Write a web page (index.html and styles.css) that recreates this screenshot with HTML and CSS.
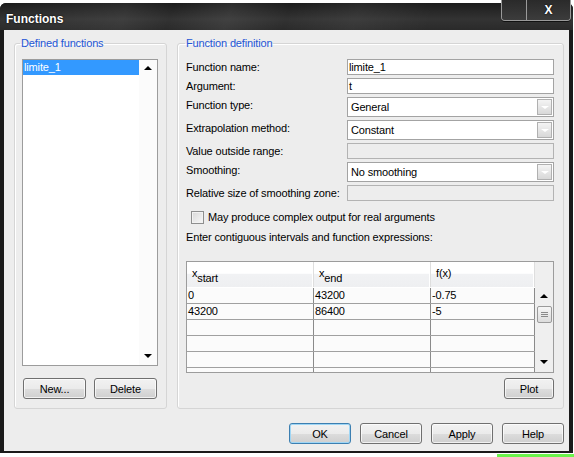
FILE: index.html
```html
<!DOCTYPE html>
<html lang="en">
<head>
    <meta charset="UTF-8">
    <title>Functions</title>
    <link rel="stylesheet" href="styles.css">
</head>
<body>
    <div class="window">
        <div class="titlebar">
            <span class="title">Functions</span>
            <div class="caption-buttons">
                <span class="cap-btn cap-blank"></span>
                <span class="cap-btn cap-close">X</span>
            </div>
        </div>
        <div class="client">
            <div class="groups">
                <fieldset class="group group-list">
                    <legend>Defined functions</legend>
                    <div class="listbox">
                        <div class="list-items">
                            <div class="list-item selected">limite_1</div>
                        </div>
                        <div class="list-scroll">
                            <span class="arrow-up"></span>
                            <span class="arrow-down"></span>
                        </div>
                    </div>
                    <div class="list-buttons">
                        <button class="btn">New...</button>
                        <button class="btn">Delete</button>
                    </div>
                </fieldset>

                <fieldset class="group group-def">
                    <legend>Function definition</legend>
                    <div class="form-grid">
                        <label class="field-label">Function name:</label>
                        <div class="textbox">limite_1</div>

                        <label class="field-label">Argument:</label>
                        <div class="textbox">t</div>

                        <label class="field-label">Function type:</label>
                        <div class="combo"><span class="combo-text">General</span><span class="combo-btn"></span></div>

                        <label class="field-label">Extrapolation method:</label>
                        <div class="combo"><span class="combo-text">Constant</span><span class="combo-btn"></span></div>

                        <label class="field-label">Value outside range:</label>
                        <div class="textbox disabled"></div>

                        <label class="field-label">Smoothing:</label>
                        <div class="combo"><span class="combo-text">No smoothing</span><span class="combo-btn"></span></div>

                        <label class="field-label">Relative size of smoothing zone:</label>
                        <div class="textbox disabled"></div>
                    </div>

                    <div class="check-row">
                        <span class="checkbox"></span>
                        <span>May produce complex output for real arguments</span>
                    </div>

                    <div class="hint">Enter contiguous intervals and function expressions:</div>

                    <div class="grid-table">
                        <div class="grid-area">
                            <div class="grid-header">
                                <div class="hcell c1">x<sub>start</sub></div>
                                <div class="hcell c2">x<sub>end</sub></div>
                                <div class="hcell c3">f(x)</div>
                            </div>
                            <div class="grid-row">
                                <div class="cell c1">0</div>
                                <div class="cell c2">43200</div>
                                <div class="cell c3">-0.75</div>
                            </div>
                            <div class="grid-row">
                                <div class="cell c1">43200</div>
                                <div class="cell c2">86400</div>
                                <div class="cell c3">-5</div>
                            </div>
                            <div class="grid-row">
                                <div class="cell c1"></div>
                                <div class="cell c2"></div>
                                <div class="cell c3"></div>
                            </div>
                            <div class="grid-row">
                                <div class="cell c1"></div>
                                <div class="cell c2"></div>
                                <div class="cell c3"></div>
                            </div>
                            <div class="grid-row">
                                <div class="cell c1"></div>
                                <div class="cell c2"></div>
                                <div class="cell c3"></div>
                            </div>
                            <div class="grid-row">
                                <div class="cell c1"></div>
                                <div class="cell c2"></div>
                                <div class="cell c3"></div>
                            </div>
                        </div>
                        <div class="grid-scroll">
                            <span class="arrow-up"></span>
                            <span class="thumb"></span>
                            <span class="arrow-down"></span>
                        </div>
                    </div>

                    <div class="plot-row">
                        <button class="btn btn-plot">Plot</button>
                    </div>
                </fieldset>
            </div>

            <div class="dialog-buttons">
                <button class="btn btn-default">OK</button>
                <button class="btn">Cancel</button>
                <button class="btn">Apply</button>
                <button class="btn">Help</button>
            </div>
        </div>
    </div>
    <div class="desk-strip">
        <span class="desk-green"></span>
    </div>
</body>
</html>
```

FILE: styles.css
```css
body {
    margin: 0;
    width: 574px;
    height: 457px;
    overflow: hidden;
    background-color: #fff;
    font-family: 'Liberation Sans', Arial, sans-serif;
    font-size: 11px;
    letter-spacing: -0.15px;
    color: #000;
}
.window {
    width: 573px;
    height: 450px;
    margin-top: 3px;
    box-sizing: border-box;
    padding: 0 4px 2px 4px;
    background-color: #1a1a1a;
    border-radius: 6px 6px 0 0;
    display: flex;
    flex-direction: column;
}
.titlebar {
    height: 27px;
    flex: none;
    margin: 0 -4px;
    padding: 0 2px 0 6px;
    display: flex;
    align-items: flex-start;
    border-radius: 6px 6px 0 0;
    background:
        linear-gradient(108deg, rgba(255,255,255,0) 0%, rgba(255,255,255,0.06) 22%, rgba(255,255,255,0) 30%,
            rgba(255,255,255,0.07) 40%, rgba(255,255,255,0) 50%, rgba(255,255,255,0.05) 62%, rgba(255,255,255,0) 75%),
        linear-gradient(#1c1c1c, #333 60%, #2a2a2a);
}
.title {
    padding-top: 9px;
    line-height: 14px;
    font-size: 12px;
    font-weight: bold;
    letter-spacing: 0;
    color: #fff;
    text-shadow: 0 0 2px #000;
}
.caption-buttons {
    margin-left: auto;
    margin-top: -3px;
    display: flex;
    height: 20px;
    border: 1px solid #9a9a9a;
    border-top: none;
    border-radius: 0 0 4px 4px;
    box-shadow: inset 0 -1px 0 #555, 0 1px 0 #111;
    overflow: hidden;
}
.cap-btn {
    display: block;
    height: 20px;
    background: linear-gradient(#2a2a2a, #3c3c3c);
}
.cap-blank {
    width: 24px;
    border-right: 1px solid #9a9a9a;
}
.cap-close {
    width: 43px;
    color: #fff;
    font-weight: bold;
    font-size: 12px;
    letter-spacing: 0;
    line-height: 20px;
    text-align: center;
    text-shadow: 0 0 2px #000;
}
.client {
    flex: 1;
    background-color: #ededed;
    padding: 7px 5px 0 10px;
    display: flex;
    flex-direction: column;
}
.groups {
    display: flex;
    gap: 10px;
}
.group {
    margin: 0;
    height: 372px;
    box-sizing: border-box;
    border: 1px solid #d5d5d5;
    border-radius: 3px;
    box-shadow: inset 1px 1px 0 #fff;
}
.group legend {
    padding: 0 1px;
    line-height: 13px;
    color: #2456d6;
}
.group-list {
    width: 153px;
    padding: 9px 7px 0 7px;
}
.group-list legend {
    margin-left: -2px;
}
.group-def {
    width: 387px;
    padding: 9px 9px 0 8px;
}
.group-def legend {
    margin-left: -1px;
}
.listbox {
    width: 136px;
    height: 307px;
    box-sizing: border-box;
    border: 1px solid #9c9c9c;
    background-color: #fff;
    display: flex;
}
.list-items {
    flex: 1;
}
.list-item {
    height: 15px;
    line-height: 15px;
    padding-left: 1px;
}
.list-item.selected {
    background-color: #3399ff;
    color: #fff;
}
.list-scroll {
    width: 18px;
    background-color: #fbfbfb;
    display: flex;
    flex-direction: column;
    align-items: center;
    justify-content: space-between;
    padding: 6px 0 7px 0;
}
.arrow-up {
    width: 0;
    height: 0;
    border-left: 4px solid transparent;
    border-right: 4px solid transparent;
    border-bottom: 4px solid #000;
}
.arrow-down {
    width: 0;
    height: 0;
    border-left: 4px solid transparent;
    border-right: 4px solid transparent;
    border-top: 4px solid #000;
}
.list-buttons {
    margin-top: 12px;
    margin-left: 1px;
    display: flex;
    gap: 8px;
}
.btn {
    width: 63px;
    height: 21px;
    padding: 0;
    border: 1px solid #707070;
    border-radius: 3px;
    background: linear-gradient(#f2f2f2 0%, #ebebeb 50%, #dddddd 51%, #cfcfcf 100%);
    box-shadow: inset 0 0 0 1px rgba(255, 255, 255, 0.7);
    font-family: 'Liberation Sans', Arial, sans-serif;
    font-size: 11px;
    letter-spacing: -0.15px;
    color: #000;
}
.btn-default {
    border-color: #3c7fb1;
    box-shadow: inset 0 0 0 1px #9fd6f5;
}
.form-grid {
    display: grid;
    grid-template-columns: 161px 207px;
    row-gap: 3px;
}
.field-label {
    padding-top: 1px;
    line-height: 14px;
}
.textbox {
    height: 16px;
    box-sizing: border-box;
    border: 1px solid #a3a3a3;
    background-color: #fff;
    padding-left: 1px;
    line-height: 14px;
}
.textbox.disabled {
    background-color: #ededed;
    border-color: #b3b3b3;
}
.combo {
    height: 20px;
    box-sizing: border-box;
    border: 1px solid #a3a3a3;
    background-color: #fff;
    padding: 1px;
    display: flex;
    align-items: center;
}
.combo-text {
    flex: 1;
    padding-left: 2px;
}
.combo-btn {
    width: 15px;
    height: 16px;
    box-sizing: border-box;
    border: 1px solid #b0b0b0;
    background: linear-gradient(#f4f4f4, #d8d8d8);
    display: flex;
    align-items: center;
    justify-content: center;
}
.combo-btn::after {
    content: "";
    width: 0;
    height: 0;
    border-left: 4px solid transparent;
    border-right: 4px solid transparent;
    border-top: 3px solid #fff;
}
.check-row {
    margin-top: 10px;
    padding-left: 5px;
    display: flex;
    align-items: center;
    gap: 4px;
    line-height: 13px;
}
.checkbox {
    width: 13px;
    height: 13px;
    box-sizing: border-box;
    border: 1px solid #8e8f8f;
    background: linear-gradient(135deg, #d8d8d8, #f8f8f8);
    box-shadow: inset 0 0 0 1px #f2f2f2;
}
.hint {
    margin-top: 7px;
    line-height: 13px;
}
.grid-table {
    margin-top: 17px;
    width: 368px;
    height: 112px;
    box-sizing: border-box;
    border: 1px solid #9c9c9c;
    display: flex;
    overflow: hidden;
}
.grid-area {
    width: 348px;
    overflow: hidden;
}
.grid-header {
    display: flex;
    height: 26px;
    box-sizing: border-box;
    border-bottom: 1px solid #fff;
}
.hcell {
    box-sizing: border-box;
    padding-left: 5px;
    padding-top: 5px;
    border-right: 1px solid #dedede;
    box-shadow: inset -1px 0 0 #fff;
    background: linear-gradient(#ffffff 0%, #ffffff 45%, #f1f2f4 50%, #eeeff1 100%);
    line-height: 13px;
}
.hcell sub {
    font-size: 11px;
    vertical-align: -5px;
    line-height: 0;
}
.c1 {
    width: 127px;
}
.c2 {
    width: 117px;
}
.c3 {
    flex: 1;
}
.grid-row {
    display: flex;
    height: 16px;
    box-sizing: border-box;
    border-bottom: 1px solid #a0a0a0;
    background-color: #fbfbfb;
}
.cell {
    box-sizing: border-box;
    padding-left: 1px;
    line-height: 15px;
    border-right: 1px solid #8a8a8a;
}
.grid-scroll {
    flex: 1;
    background-color: #efefef;
    display: flex;
    flex-direction: column;
    align-items: center;
    padding: 32px 0 8px 0;
}
.grid-scroll .thumb {
    margin-top: 8px;
    width: 15px;
    height: 17px;
    box-sizing: border-box;
    border: 1px solid #9a9a9a;
    border-radius: 2px;
    background:
        linear-gradient(#8a8a8a, #8a8a8a) center 5px / 7px 1px no-repeat,
        linear-gradient(#8a8a8a, #8a8a8a) center 7px / 7px 1px no-repeat,
        linear-gradient(#8a8a8a, #8a8a8a) center 9px / 7px 1px no-repeat,
        linear-gradient(#f6f6f6, #dcdcdc);
}
.grid-scroll .arrow-down {
    margin-top: auto;
}
.plot-row {
    margin-top: 5px;
    display: flex;
    justify-content: flex-end;
}
.btn-plot {
    width: 50px;
}
.dialog-buttons {
    margin-top: 14px;
    display: flex;
    justify-content: flex-end;
    gap: 9px;
}
.dialog-buttons .btn {
    width: 62px;
}
.desk-strip {
    height: 4px;
    display: flex;
    justify-content: flex-end;
    align-items: flex-end;
}
.desk-green {
    width: 77px;
    height: 3px;
    background-color: #6cf44c;
}
```
